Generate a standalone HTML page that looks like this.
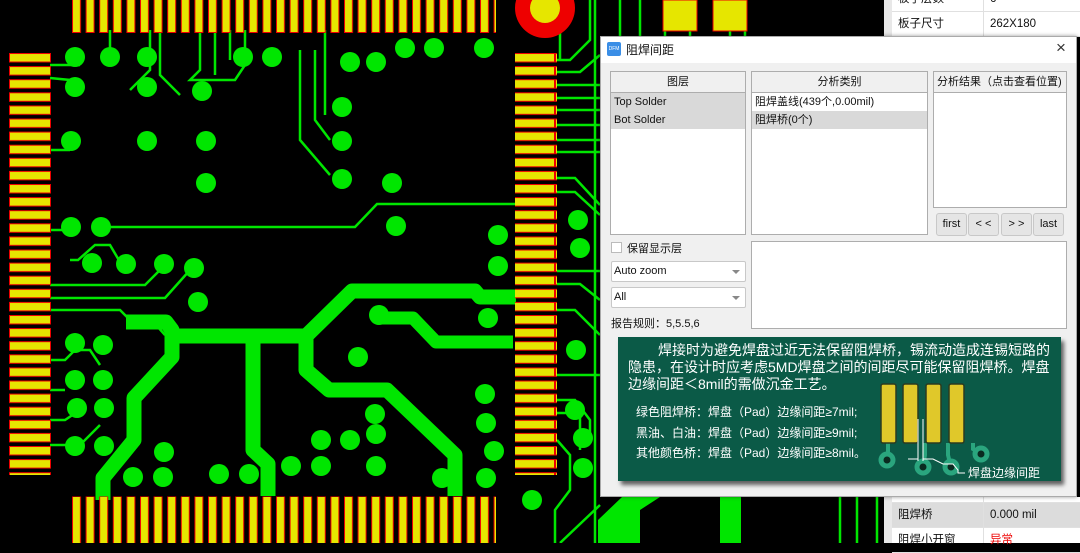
<!DOCTYPE html>
<html><head><meta charset="utf-8"><style>
*{margin:0;padding:0;box-sizing:border-box}
body{width:1080px;height:543px;overflow:hidden;background:#000;position:relative;font-family:"Liberation Sans","Noto Sans CJK SC",sans-serif;font-size:11px;color:#111}
.abs{position:absolute}
.tbl{left:884px;width:196px;background:#fff;border-left:8px solid #e8e8e8}
.row{position:absolute;left:0;width:196px;height:25px;border-bottom:1px solid #e0e0e0;font-size:11.5px;line-height:25px}
.row span{position:absolute}
.dlg{left:600px;top:36px;width:477px;height:461px;background:#f0f0f0;border:1px solid #aaa;box-shadow:0 0 4px rgba(0,0,0,.4)}
.panel{position:absolute;background:#fff;border:1px solid #adadad}
.hd{height:21px;background:#f0f0f0;border-bottom:1px solid #adadad;text-align:center;line-height:20px;font-size:11px}
.it{height:18px;line-height:18px;padding-left:3px;font-size:11px}
.btn{position:absolute;height:23px;background:#e5e5e5;border:1px solid #c8c8c8;border-radius:3px;text-align:center;line-height:21px;font-size:11px}
.cb{position:absolute;left:10px;width:135px;height:21px;background:#fff;border:1px solid #c8c8c8;border-radius:2px;line-height:19px;padding-left:2px;font-size:11px}
.cb:after{content:"";position:absolute;right:5px;top:8px;border:4px solid transparent;border-top:4px solid #888}
</style></head><body>
<svg class="abs" style="left:0;top:0" width="1080" height="543">
<defs>
<pattern id="lp" x="9" y="53" width="42" height="13.1" patternUnits="userSpaceOnUse"><rect x="0.5" y="0.5" width="41" height="8.5" fill="#e6e600" stroke="#e00" stroke-width="1"/></pattern>
<pattern id="tp" x="72" y="-3" width="13.6" height="60" patternUnits="userSpaceOnUse"><rect x="0.5" y="0" width="8" height="35.5" fill="#e6e600" stroke="#e00" stroke-width="1"/></pattern>
<pattern id="bp" x="72" y="496.5" width="13.6" height="60" patternUnits="userSpaceOnUse"><rect x="0.5" y="0" width="8" height="55" fill="#e6e600" stroke="#e00" stroke-width="1"/></pattern>
</defs>
<g stroke="#00e600" fill="none" stroke-width="2.5">
<path d="M110 227H355L377 204H516"/>
<path d="M50 310H120L128 318H150L165 335"/>
<path d="M50 285H145L165 265M50 298H165L190 270M70 260H78L95 245H110L120 262"/>
<path d="M300 50V140L330 175M315 50V120L330 140M325 30V115"/>
<path d="M200 30V70L190 80H235L245 65V30M215 30V75M230 30V60"/>
<path d="M150 30V70L130 90M160 30V75L180 95M110 30V60"/>
<path d="M50 230H70M50 65H80M50 78L70 80L78 90M50 150H70"/>
<path d="M50 360H65L75 350H90L100 365M50 390H65M50 420H65L80 410M50 445H80L100 425"/>
<path d="M557 60H570L590 40V0M557 72H580L600 55M557 85H600M557 98H600M557 110H600M557 125H600M557 140H600M557 152H600M557 178H575L600 205M557 192H575L600 215"/>
<path d="M557 271H600M557 284H580L600 300M557 310H575L600 335M557 375H600M557 400H575L590 420V440M557 413H580V450M557 440L570 455V490L555 510V543M560 543L600 505"/>
<path d="M595 0V543M560 0V60M665 0V36M690 0V36M730 0V36M745 0V36M620 0V36M640 0V36M840 497V543M857 497V543M877 497V543"/>
</g>
<g stroke="#00e600" fill="none" stroke-width="15" stroke-linejoin="round">
<path d="M126 322H166L172 330V357L134 398V440L103 478V500"/>
<path d="M166 336H306L352 291H475L480 297H516"/>
<path d="M253 336V450L268 464V496"/>
<path d="M306 336V370L329 390H387L455 455V496"/>
<path d="M379 318H413L436 342H513" stroke-width="13"/>
</g>
<path d="M622 497L598 520V543H640V510L660 497Z" fill="#00e600"/>
<rect x="720" y="497" width="21" height="46" fill="#00e600"/>
<rect x="9" y="53" width="42" height="422" fill="url(#lp)"/>
<rect x="515" y="53" width="42" height="422" fill="url(#lp)"/>
<rect x="72" y="0" width="424" height="33" fill="url(#tp)"/>
<rect x="72" y="496" width="424" height="47" fill="url(#bp)"/>
<circle cx="545" cy="8" r="30" fill="#e00"/><circle cx="545" cy="8" r="15" fill="#e6e600"/>
<rect x="663" y="0" width="34" height="31" fill="#e6e600" stroke="#e00"/>
<rect x="713" y="0" width="34" height="31" fill="#e6e600" stroke="#e00"/>
<g fill="#00e600">
<circle cx="75" cy="57" r="10"/><circle cx="110" cy="57" r="10"/><circle cx="147" cy="57" r="10"/><circle cx="243" cy="57" r="10"/><circle cx="272" cy="57" r="10"/><circle cx="350" cy="62" r="10"/><circle cx="376" cy="62" r="10"/><circle cx="405" cy="48" r="10"/><circle cx="434" cy="48" r="10"/><circle cx="484" cy="48" r="10"/>
<circle cx="75" cy="87" r="10"/><circle cx="147" cy="87" r="10"/><circle cx="202" cy="91" r="10"/><circle cx="342" cy="107" r="10"/>
<circle cx="71" cy="141" r="10"/><circle cx="147" cy="141" r="10"/><circle cx="206" cy="141" r="10"/><circle cx="342" cy="141" r="10"/>
<circle cx="206" cy="183" r="10"/><circle cx="342" cy="179" r="10"/><circle cx="392" cy="183" r="10"/>
<circle cx="71" cy="227" r="10"/><circle cx="101" cy="227" r="10"/><circle cx="396" cy="226" r="10"/>
<circle cx="92" cy="263" r="10"/><circle cx="126" cy="264" r="10"/><circle cx="164" cy="264" r="10"/><circle cx="194" cy="268" r="10"/><circle cx="198" cy="302" r="10"/>
<circle cx="498" cy="235" r="10"/><circle cx="578" cy="220" r="10"/><circle cx="498" cy="266" r="10"/><circle cx="580" cy="248" r="10"/>
<circle cx="379" cy="315" r="10"/><circle cx="358" cy="357" r="10"/><circle cx="488" cy="318" r="10"/><circle cx="576" cy="350" r="10"/>
<circle cx="75" cy="343" r="10"/><circle cx="103" cy="345" r="10"/><circle cx="75" cy="380" r="10"/><circle cx="103" cy="380" r="10"/><circle cx="77" cy="408" r="10"/><circle cx="104" cy="408" r="10"/><circle cx="75" cy="446" r="10"/><circle cx="104" cy="446" r="10"/>
<circle cx="164" cy="452" r="10"/><circle cx="133" cy="477" r="10"/><circle cx="163" cy="477" r="10"/><circle cx="219" cy="474" r="10"/><circle cx="249" cy="474" r="10"/><circle cx="291" cy="466" r="10"/>
<circle cx="321" cy="440" r="10"/><circle cx="350" cy="440" r="10"/><circle cx="376" cy="434" r="10"/><circle cx="321" cy="466" r="10"/><circle cx="376" cy="466" r="10"/><circle cx="375" cy="414" r="10"/>
<circle cx="442" cy="478" r="10"/><circle cx="486" cy="478" r="10"/><circle cx="494" cy="451" r="10"/><circle cx="486" cy="423" r="10"/><circle cx="485" cy="394" r="10"/><circle cx="575" cy="410" r="10"/><circle cx="583" cy="438" r="10"/><circle cx="583" cy="468" r="10"/><circle cx="532" cy="500" r="10"/>
</g>
</svg>

<div class="abs tbl" style="top:0;height:36px">
<div class="row" style="top:-13px"><span style="left:6px">板子层数</span><span style="left:98px">6</span></div>
<div class="row" style="top:12px"><span style="left:6px">板子尺寸</span><span style="left:98px">262X180</span></div>
<div style="position:absolute;left:91px;top:0;width:1px;height:36px;background:#e0e0e0"></div>
</div>
<div class="abs tbl" style="top:497px;height:46px">
<div class="row" style="top:0;height:6px"></div>
<div class="row" style="top:6px;background:#dcdcdc"><span style="left:6px">阻焊桥</span><span style="left:98px">0.000 mil</span></div>
<div class="row" style="top:31px"><span style="left:6px">阻焊小开窗</span><span style="left:98px;color:#e00">异常</span></div>
<div style="position:absolute;left:91px;top:0;width:1px;height:46px;background:#e0e0e0"></div>
</div>

<div class="abs dlg">
<div style="position:absolute;left:0;top:0;width:475px;height:26px;background:#fff"></div>
<div style="position:absolute;left:6px;top:5px;width:14px;height:14px;background:#3a8ee6;border-radius:2px;color:#fff;font-size:5px;line-height:14px;text-align:center">DFM</div>
<div style="position:absolute;left:25px;top:4px;font-size:12px">阻焊间距</div>
<div style="position:absolute;left:455px;top:1px;font-size:17px;color:#333">×</div>

<div class="panel" style="left:9px;top:34px;width:136px;height:164px">
<div class="hd">图层</div>
<div class="it" style="background:#d9d9d9">Top Solder</div>
<div class="it" style="background:#d9d9d9">Bot Solder</div>
</div>
<div class="panel" style="left:150px;top:34px;width:177px;height:164px">
<div class="hd">分析类别</div>
<div class="it">阻焊盖线(439个,0.00mil)</div>
<div class="it" style="background:#d9d9d9">阻焊桥(0个)</div>
</div>
<div class="panel" style="left:332px;top:34px;width:134px;height:137px">
<div class="hd" style="text-align:left;padding-left:3px">分析结果（点击查看位置)</div>
</div>
<div class="btn" style="left:335px;width:31px;top:176px">first</div>
<div class="btn" style="left:367px;width:31px;top:176px">&lt; &lt;</div>
<div class="btn" style="left:400px;width:31px;top:176px">&gt; &gt;</div>
<div class="btn" style="left:432px;width:31px;top:176px">last</div>
<div style="position:absolute;left:10px;top:205px;width:11px;height:11px;background:#fff;border:1px solid #bbb"></div>
<div style="position:absolute;left:26px;top:203px">保留显示层</div>
<div class="cb" style="top:224px">Auto zoom</div>
<div class="cb" style="top:250px">All</div>
<div style="position:absolute;left:10px;top:278px">报告规则：5,5.5,6</div>
<div class="panel" style="left:150px;top:204px;width:316px;height:88px"></div>

<div style="position:absolute;left:17px;top:300px;width:443px;height:144px;background:#0b5a47;box-shadow:3px 4px 4px rgba(0,0,0,.6);color:#fff">
<div style="position:absolute;left:10px;top:5px;width:428px;font-size:14px;line-height:17px;text-indent:30px">焊接时为避免焊盘过近无法保留阻焊桥，锡流动造成连锡短路的隐患，在设计时应考虑5MD焊盘之间的间距尽可能保留阻焊桥。焊盘边缘间距＜8mil的需做沉金工艺。</div>
<div style="position:absolute;left:18px;top:65px;font-size:12px;line-height:20.5px">绿色阻焊桥：焊盘（Pad）边缘间距≥7mil;<br>黑油、白油：焊盘（Pad）边缘间距≥9mil;<br>其他颜色桥：焊盘（Pad）边缘间距≥8mil。</div>
<svg style="position:absolute;left:0;top:0" width="443" height="144">
<g stroke="#2aa57e" stroke-width="4" fill="none">
<path d="M270 106V123M307 106V118L305 130M330 106V118L333 130M355 106V112L363 117"/>
</g>
<g fill="#2aa57e"><circle cx="269" cy="123" r="8.5"/><circle cx="305" cy="130" r="8.5"/><circle cx="333" cy="130" r="8.5"/><circle cx="363" cy="117" r="8.5"/></g>
<g fill="#0a2a20"><circle cx="269" cy="123" r="3.5"/><circle cx="305" cy="130" r="3.5"/><circle cx="333" cy="130" r="3.5"/><circle cx="363" cy="117" r="3.5"/></g>
<g fill="#e0c82a" stroke="#2a3a20" stroke-width="1.5">
<rect x="263" y="47" width="15" height="59" rx="2"/><rect x="285" y="47" width="15" height="59" rx="2"/><rect x="308" y="47" width="15" height="59" rx="2"/><rect x="331" y="47" width="15" height="59" rx="2"/>
</g>
<g stroke="#fff" stroke-width="1" fill="none"><path d="M300 82V124M305 82V124M290 122H300M305 122H315L325 127H335L340 133V136H347"/></g>
<text x="350" y="140" fill="#fff" font-size="12" font-family="Noto Sans CJK SC,sans-serif">焊盘边缘间距</text>
</svg>
</div>
</div>
</body></html>
